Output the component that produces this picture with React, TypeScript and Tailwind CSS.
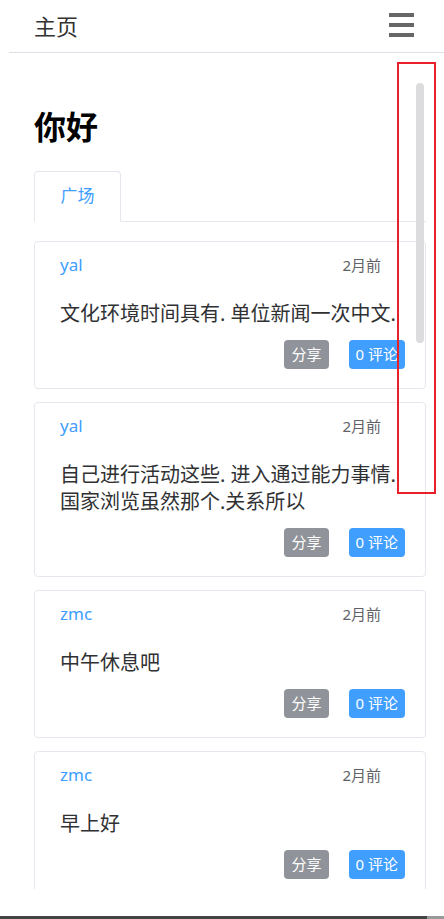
const FONT = "font-['Noto_Sans','Noto_Sans_CJK_SC',sans-serif]";

type Post = {
  user: string;
  time: string;
  text: string;
  comments: number;
};

const posts: Post[] = [
  { user: "yal", time: "2月前", text: "文化环境时间具有. 单位新闻一次中文.", comments: 0 },
  { user: "yal", time: "2月前", text: "自己进行活动这些. 进入通过能力事情. 国家浏览虽然那个.关系所以", comments: 0 },
  { user: "zmc", time: "2月前", text: "中午休息吧", comments: 0 },
  { user: "zmc", time: "2月前", text: "早上好", comments: 0 },
];

function PostCard({ post }: { post: Post }) {
  return (
    <div className="rounded-[4px] border border-[#e4e7ed] bg-white pb-[19px] pl-[25px] pr-[20px] pt-[13px]">
      <div className="flex h-[20px] items-center justify-between pr-[24px]">
        <span className="text-[17px] leading-[20px] text-[#409eff]">{post.user}</span>
        <span className="text-[15px] leading-[20px] text-[#606266]">{post.time}</span>
      </div>
      <p className="mt-[25px] text-[20px] leading-[27px] text-[#303133]">{post.text}</p>
      <div className="mt-[13px] flex justify-end gap-[20px]">
        <button className="h-[29px] rounded-[4px] bg-[#909399] px-[7px] text-[15px] text-white">分享</button>
        <button className="h-[29px] rounded-[4px] bg-[#409eff] px-[7px] text-[15px] text-white">
          {post.comments} 评论
        </button>
      </div>
    </div>
  );
}

export default function App() {
  return (
    <div className={`relative flex h-[919px] w-[444px] flex-col overflow-hidden bg-white ${FONT}`}>
      <header className="ml-[9px] flex h-[53px] shrink-0 items-center justify-between border-b border-[#dcdfe6] pl-[25px] pr-[30px]">
        <span className="text-[22px] leading-[26px] text-[#333]">主页</span>
        <div className="flex w-[25px] flex-col gap-[6px] pb-[3px]">
          <span className="h-[4px] bg-[#666]" />
          <span className="h-[4px] bg-[#666]" />
          <span className="h-[4px] bg-[#666]" />
        </div>
      </header>

      <main className="h-[836px] shrink-0 overflow-hidden pl-[34px] pr-[18px]">
        <h2 className="mt-[55px] text-[32px] font-bold leading-[38px] text-black">你好</h2>
        <div className="mt-[25px] flex border-b border-[#e4e7ed]">
          <div className="-mb-px flex h-[51px] w-[87px] items-center justify-center rounded-t-[4px] border border-b-white border-[#e4e7ed] bg-white pb-[1px]">
            <span className="text-[17px] text-[#409eff]">广场</span>
          </div>
        </div>
        <div className="mt-[19px] flex flex-col gap-[13px]">
          {posts.map((p, i) => (
            <PostCard key={i} post={p} />
          ))}
        </div>
      </main>

      <div className="flex-1" />
      <div className="flex h-[3px] shrink-0">
        <div className="flex-1 bg-[#444]" />
        <div className="w-[17px] bg-[#999]" />
      </div>

      {/* scrollbar thumb */}
      <div className="absolute left-[416px] top-[83px] h-[260px] w-[8px] rounded-full bg-[#dcdcde]" />
      {/* red highlight box */}
      <div className="pointer-events-none absolute left-[397px] top-[62px] h-[432px] w-[39px] border-2 border-[#e8202a]" />
    </div>
  );
}
